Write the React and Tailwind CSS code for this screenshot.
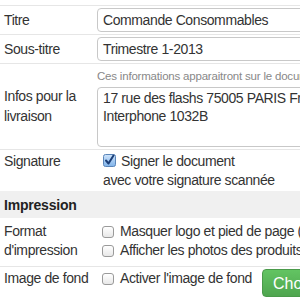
import React from 'react';

function Box({ checked }) {
    if (checked) {
        return (
            <svg width="13" height="13" viewBox="0 0 13 13" className="inline-block shrink-0">
                <defs>
                    <linearGradient id="chk" x1="0" y1="0" x2="0" y2="1">
                        <stop offset="0" stopColor="#cfe4fb" />
                        <stop offset="1" stopColor="#7fb3ea" />
                    </linearGradient>
                </defs>
                <rect x="0.5" y="0.5" width="12" height="12" rx="2" fill="url(#chk)" stroke="#5a85b8" />
                <path d="M3 6.5 L5.5 9.5 L10.5 1.5" fill="none" stroke="#1c3f78" strokeWidth="2" strokeLinecap="round" strokeLinejoin="round" />
            </svg>
        );
    }
    return (
        <span className="inline-block w-[12px] h-[12px] shrink-0 rounded-[3px] border border-[#9a9a9a] bg-gradient-to-b from-white to-[#e8e8e8]" />
    );
}

function Row({ label, children, className = '' }) {
    return (
        <div className={`flex border-t border-[#e6e6e6] ${className}`}>
            <div className="w-[97px] shrink-0 pl-[4px]">{label}</div>
            <div className="flex-1 min-w-0">{children}</div>
        </div>
    );
}

export default function App() {
    return (
        <div className="w-[300px] h-[300px] overflow-hidden bg-white font-['Liberation_Sans',Arial,sans-serif] text-[14px] tracking-[-0.4px] leading-[19px] text-[#333]">
            <div className="h-[5px]" />

            <Row label={<div className="pt-[3px]">Titre</div>} className="py-[2px]">
                <div className="h-[24px] w-[260px] rounded-[4px] border border-[#c8c8c8] px-[5px] leading-[22px] whitespace-nowrap">
                    Commande Consommables
                </div>
            </Row>

            <Row label={<div className="pt-[3px]">Sous-titre</div>} className="py-[2px]">
                <div className="h-[24px] w-[260px] rounded-[4px] border border-[#c8c8c8] px-[5px] leading-[22px] whitespace-nowrap">
                    Trimestre 1-2013
                </div>
            </Row>

            <Row
                label={<div className="pt-[22px] leading-[20px]">Infos pour la<br />livraison</div>}
                className="pb-[2px]"
            >
                <div className="pt-[5px] pb-[4px] text-[11.5px] tracking-[-0.2px] leading-[14px] text-[#888] whitespace-nowrap">
                    Ces informations apparaitront sur le document
                </div>
                <div className="h-[60px] w-[260px] rounded-[4px] border border-[#c8c8c8] px-[5px] pt-[1px] leading-[18px] whitespace-nowrap">
                    17 rue des flashs 75005 PARIS France<br />Interphone 1032B
                </div>
            </Row>

            <Row label={<div>Signature</div>} className="pt-[2px] pb-[1px]">
                <div className="pl-[6px] whitespace-nowrap">
                    <div className="flex items-center gap-[5px]">
                        <span className="relative top-[-1px] flex"><Box checked /></span>
                        <span>Signer le document</span>
                    </div>
                    <div>avec votre signature scannée</div>
                </div>
            </Row>

            <div className="h-[27px] bg-[#f0f0f0] pl-[4px] pt-[4px] text-[14px] leading-[20px] tracking-[-0.2px] font-bold text-[#222]">
                Impression
            </div>

            <Row
                label={<div>Format<br />d'impression</div>}
                className="border-t-0 pt-[4px] pb-[6px]"
            >
                <div className="pl-[5px] whitespace-nowrap">
                    <div className="flex items-center gap-[6px]">
                        <Box />
                        <span>Masquer logo et pied de page (sur</span>
                    </div>
                    <div className="flex items-center gap-[6px]">
                        <Box />
                        <span>Afficher les photos des produits</span>
                    </div>
                </div>
            </Row>

            <Row label={<div>Image de fond</div>} className="pt-[2px]">
                <div className="flex items-start pl-[5px] whitespace-nowrap">
                    <span className="mt-[4px] flex"><Box /></span>
                    <span className="ml-[6px]">Activer l'image de fond</span>
                    <button className="ml-[10px] h-[28px] rounded-[4px] border border-[#4a9a4a] bg-gradient-to-b from-[#62c462] to-[#4fa54f] px-[10px] text-[16px] tracking-normal text-white">
                        Choisir...
                    </button>
                </div>
            </Row>
        </div>
    );
}
